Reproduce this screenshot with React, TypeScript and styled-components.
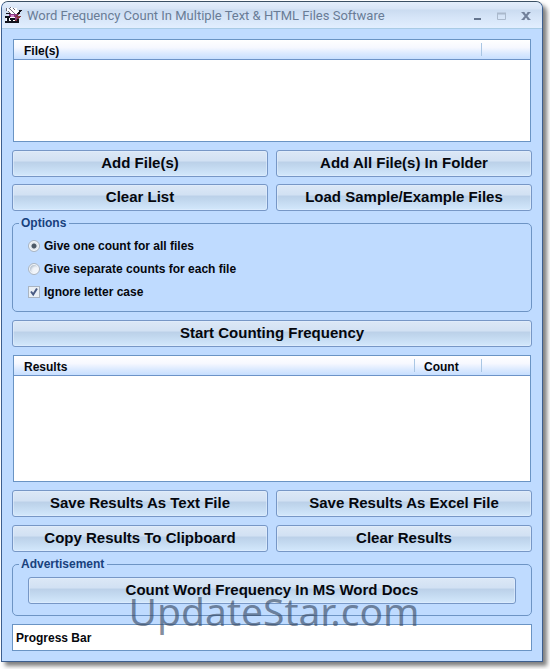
import React, { useState } from "react";
import styled, { createGlobalStyle } from "styled-components";

const GlobalStyle = createGlobalStyle`
  *, *::before, *::after { box-sizing: border-box; }
  body {
    margin: 0;
    background: #fff;
    color: #05070d;
    font: bold 12px/16px "Liberation Sans", Arial, sans-serif;
  }
`;

const Window = styled.main`
  position: relative;
  margin: 1px 7px 7px 1px;
  border: 1px solid #3d5f8f;
  border-top-color: #3b5064;
  border-radius: 7px 7px 0 0;
  background: #bfdbff;
  box-shadow: 4px 4px 4px rgba(0, 0, 0, 0.5);
`;

const TitleBar = styled.header`
  display: flex;
  align-items: center;
  height: 27px;
  padding: 2px 9px 0 3px;
  border-bottom: 1px solid #a9cbe5;
  border-radius: 6px 6px 0 0;
  background: linear-gradient(#e4eefb 0, #d8e5f6 25%, #cbdcf1 32%, #d6e5f8 60%, #e2eefe 100%);
`;

const Title = styled.h1`
  flex: 1;
  margin: 0 0 0 4px;
  color: #697c96;
  font: 13px/20px Roboto, Tahoma, sans-serif;
  white-space: nowrap;
`;

const Controls = styled.div`
  display: flex;
  gap: 10px;
`;

const ControlButton = styled.button`
  display: grid;
  place-items: center;
  width: 14px;
  height: 14px;
  padding: 0;
  border: 0;
  background: none;
`;

const Content = styled.div`
  display: flex;
  flex-direction: column;
  gap: 8px;
  padding: 10px;
`;

const ListBox = styled.div<{ $height: number }>`
  height: ${(p) => p.$height}px;
  margin: 0 1px;
  border: 1px solid #6a94c4;
  background: #fff;
`;

const Table = styled.table`
  width: 100%;
  table-layout: fixed;
  border-collapse: separate;
  border-spacing: 0;
`;

const HeadCell = styled.th<{ $width?: number; $divided?: boolean }>`
  width: ${(p) => (p.$width ? `${p.$width}px` : "auto")};
  height: 20px;
  padding: 2px 0 0 10px;
  border-bottom: 1px solid #6c93c8;
  background:
    ${(p) => (p.$divided ? "linear-gradient(#a9c6e4, #a9c6e4) 0 3px / 1px 13px no-repeat," : "")}
    linear-gradient(#fff 0, #f6f8ff 40%, #dceaff 70%, #c7dfff 100%);
  text-align: left;
`;

const ButtonGrid = styled.div<{ $gap?: number }>`
  display: grid;
  grid-template-columns: 1fr 1fr;
  gap: ${(p) => p.$gap ?? 8}px 8px;
`;

const PushButton = styled.button`
  width: 100%;
  height: 27px;
  padding: 0 0 2px;
  border: 1px solid #7797c6;
  border-radius: 3px;
  background: linear-gradient(#dce8f6 0, #d2e1f3 38%, #bcd1e9 46%, #c1d7ee 60%, #d3e8fc 100%);
  box-shadow: inset 0 0 0 1px rgba(225, 239, 255, 0.6);
  color: #05070d;
  font: bold 15px/20px "Liberation Sans", Arial, sans-serif;
`;

const Group = styled.fieldset<{ $bottom: number }>`
  min-width: 0;
  margin: -4px 0 0;
  padding: 5px 15px ${(p) => p.$bottom}px;
  border: 1px solid #6d94c4;
  border-radius: 5px;
`;

const Legend = styled.legend`
  margin-left: -9px;
  padding: 0 3px 0 2px;
  color: #19417d;
`;

const Choices = styled.div`
  display: flex;
  flex-direction: column;
  align-items: flex-start;
  gap: 7px;
  padding: 2px 0;
`;

const Choice = styled.label`
  display: flex;
  align-items: center;
  gap: 4px;
`;

const Toggle = styled.input`
  appearance: none;
  width: 12px;
  height: 12px;
  margin: 0;
  border: 1px solid #aab5c2;
  background: #f1f5fa;
  box-shadow: inset 0 0 0 1px #f7fafd, inset 2px 2px 2px #b8c4d0;

  &[type="radio"] {
    border-radius: 50%;
  }
  &[type="radio"]:checked {
    background: radial-gradient(circle, #4d5966 0 2px, #e2e8ee 3px);
    box-shadow: inset 0 0 0 1px #f7fafd;
  }
  &[type="checkbox"]:checked {
    background: #eaf0f6 url("data:image/svg+xml,%3Csvg xmlns='http://www.w3.org/2000/svg' viewBox='0 0 10 10'%3E%3Cpath d='M2 4.5l2.2 3L8 1.5' fill='none' stroke='%234a5c84' stroke-width='2'/%3E%3C/svg%3E") center / 10px no-repeat;
    box-shadow: none;
  }
`;

const Progress = styled.div`
  height: 27px;
  padding: 5px 3px;
  border: 1px solid #6a94c4;
  background: #fff;
`;

const Watermark = styled.div`
  position: absolute;
  right: 0;
  bottom: 24px;
  left: 4px;
  color: rgba(50, 66, 90, 0.6);
  font: 39px/52px "Noto Sans", sans-serif;
  text-align: center;
  pointer-events: none;
`;

const AppIcon = () => (
  <svg width="18" height="18" viewBox="0 0 18 18" shapeRendering="crispEdges" aria-hidden="true">
    <path d="M1 2l9 7M5 1l7 7M9 1l5 6" stroke="#6f6b78" strokeWidth="2" />
    <path d="M2 2l9 7M6 1l7 7M10 1l4 6" stroke="#fff" strokeWidth="2" />
    <path d="M4 7h8l2 4-4 4-5-3z" fill="#8e3b86" />
    <path d="M1 6h4v1H1zM7 9h2v2H7z" fill="#17131d" />
    <path d="M11 10l5-7M10 15l5-6" stroke="#863642" strokeWidth="2" />
    <path d="M13 7l3-4M13 12v3h-2" stroke="#15131b" fill="none" strokeWidth="2" />
    <path d="M1 10h9v6H1z" fill="#fff" />
    <path d="M0 10h5M3 10v6M0 15h11M7 11v5M5 12h5" stroke="#11131c" strokeWidth="2" />
    <path d="M6 8h3v2H6z" fill="#d68bd0" />
  </svg>
);

const choices = ["Give one count for all files", "Give separate counts for each file"];

export default function App() {
  const [mode, setMode] = useState(0);
  const [ignoreCase, setIgnoreCase] = useState(true);

  return (
    <>
      <GlobalStyle />
      <Window>
        <TitleBar>
          <AppIcon />
          <Title>Word Frequency Count In Multiple Text &amp; HTML Files Software</Title>
          <Controls>
            <ControlButton aria-label="Minimize">
              <svg width="14" height="14"><path d="M3 10h7" stroke="#65758e" strokeWidth="2" /></svg>
            </ControlButton>
            <ControlButton aria-label="Maximize">
              <svg width="14" height="14" fill="none" stroke="#aab9cc"><path d="M2.5 4.5h8v6h-8z" /><path d="M2 4.5h9" strokeWidth="2" /></svg>
            </ControlButton>
            <ControlButton aria-label="Close">
              <svg width="14" height="14" stroke="#71809a"><path d="M4 3.5l6 7M10 3.5l-6 7" strokeWidth="2" /><path d="M2.5 3.5h3M8.5 3.5h3M2.5 10.5h3M8.5 10.5h3" /></svg>
            </ControlButton>
          </Controls>
        </TitleBar>

        <Content>
          <ListBox $height={103}>
            <Table>
              <thead>
                <tr>
                  <HeadCell scope="col">File(s)</HeadCell>
                  <HeadCell $width={49} $divided />
                </tr>
              </thead>
            </Table>
          </ListBox>

          <ButtonGrid $gap={7}>
            <PushButton>Add File(s)</PushButton>
            <PushButton>Add All File(s) In Folder</PushButton>
            <PushButton>Clear List</PushButton>
            <PushButton>Load Sample/Example Files</PushButton>
          </ButtonGrid>

          <Group $bottom={9}>
            <Legend>Options</Legend>
            <Choices>
              {choices.map((text, i) => (
                <Choice key={text}>
                  <Toggle type="radio" name="mode" checked={mode === i} onChange={() => setMode(i)} />
                  {text}
                </Choice>
              ))}
              <Choice>
                <Toggle type="checkbox" checked={ignoreCase} onChange={(e) => setIgnoreCase(e.target.checked)} />
                Ignore letter case
              </Choice>
            </Choices>
          </Group>

          <PushButton>Start Counting Frequency</PushButton>

          <ListBox $height={127}>
            <Table>
              <thead>
                <tr>
                  <HeadCell scope="col">Results</HeadCell>
                  <HeadCell scope="col" $width={67} $divided>Count</HeadCell>
                  <HeadCell $width={49} $divided />
                </tr>
              </thead>
            </Table>
          </ListBox>

          <ButtonGrid>
            <PushButton>Save Results As Text File</PushButton>
            <PushButton>Save Results As Excel File</PushButton>
            <PushButton>Copy Results To Clipboard</PushButton>
            <PushButton>Clear Results</PushButton>
          </ButtonGrid>

          <Group $bottom={11}>
            <Legend>Advertisement</Legend>
            <PushButton>Count Word Frequency In MS Word Docs</PushButton>
          </Group>

          <Progress>Progress Bar</Progress>
        </Content>
        <Watermark>UpdateStar.com</Watermark>
      </Window>
    </>
  );
}
